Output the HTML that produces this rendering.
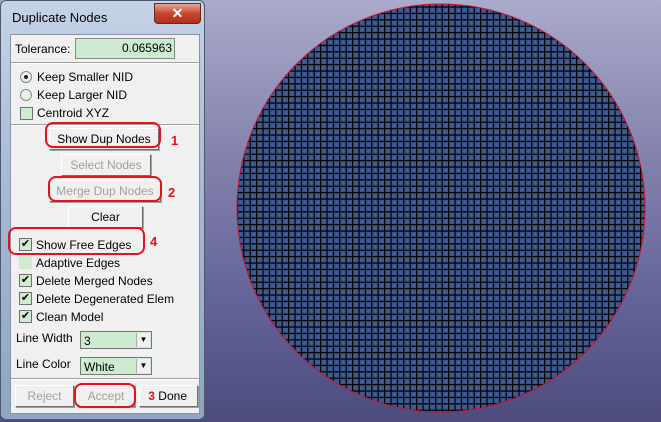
<!DOCTYPE html>
<html><head><style>
body{margin:0;width:661px;height:422px;overflow:hidden;position:relative;font-family:"Liberation Sans",sans-serif;font-size:12px;background:linear-gradient(#aaaacb 0%,#8584ae 35%,#65649a 70%,#4d4c7d 100%)}
.win{position:absolute;left:0;top:0;width:205px;height:420px;background:linear-gradient(#c4d3e6,#a9bcd6 40%,#8fa5c3);border:1px solid #4c5a70;border-radius:6px;box-sizing:border-box}
.title{position:absolute;left:11px;top:9px;font-size:13px;color:#000}
.close{position:absolute;left:153px;top:2px;width:45px;height:19px;background:linear-gradient(#e8a595,#c8452f 50%,#b0301c);border:1px solid #6a2a22;border-radius:0 0 4px 4px;color:#fff;text-align:center;font-weight:bold;font-size:14px;line-height:19px}
.panel{position:absolute;left:9px;top:33px;width:188px;height:378px;background:#f0f0f0;border:1px solid #8a94a4}
.a{position:absolute;white-space:nowrap}
.sep{position:absolute;left:0;width:188px;height:1px;background:#a0a0a0;border-bottom:1px solid #fff}
.btn{position:absolute;background:#f0f0f0;border:1px solid;border-color:#fff #707070 #707070 #fff;box-shadow:1px 1px 0 #a0a0a0;text-align:center;line-height:20px}
.dis{color:#a0a0a0}
.cb{position:absolute;width:11px;height:11px;background:#d0ecd0;border:1px solid #707070;font-size:11px;line-height:11px;text-align:center}
.rd{position:absolute;width:10px;height:10px;border-radius:50%;background:#e4f2e4;border:1px solid #888}
.red{position:absolute;border:2px solid #e8101a;border-radius:8px}
.num{position:absolute;color:#e8101a;font-weight:bold;font-size:13px}
.sel{position:absolute;width:72px;height:18px;background:#cdebd0;border:1px solid #777;box-sizing:border-box}
.sel span{position:absolute;left:3px;top:2px}
.sel i{position:absolute;right:1px;top:1px;width:13px;height:14px;background:#f0f0f0;border-left:1px solid #aaa;font-style:normal;font-size:8px;text-align:center;line-height:14px}
</style></head><body>
<svg style="position:absolute;left:0;top:0" width="661" height="422">
<defs><pattern id="g" width="6.4" height="6.4" patternUnits="userSpaceOnUse" x="0" y="0"><rect width="6.4" height="6.4" fill="#3d5b90"/><path d="M0 0.6H6.4M0.6 0V6.4" stroke="#000" stroke-width="1.2"/></pattern></defs>
<circle cx="441" cy="208" r="204" fill="url(#g)" stroke="#d01030" stroke-width="1"/>
</svg>
<div class="win">
<div class="title">Duplicate Nodes</div>
<div class="close">✕</div>
<div class="panel">
<div class="a" style="left:4px;top:7px">Tolerance:</div>
<div class="a" style="left:64px;top:3px;width:96px;height:19px;background:#cdebd0;border:1px solid #888;text-align:right;line-height:19px;padding-right:2px">0.065963</div>
<div class="sep" style="top:27px"></div>
<div class="rd" style="left:9px;top:36px"><div style="width:4px;height:4px;background:#222;border-radius:50%;margin:3px"></div></div>
<div class="a" style="left:26px;top:35px">Keep Smaller NID</div>
<div class="rd" style="left:9px;top:54px"></div>
<div class="a" style="left:26px;top:53px">Keep Larger NID</div>
<div class="cb" style="left:9px;top:72px"></div>
<div class="a" style="left:26px;top:71px">Centroid XYZ</div>
<div class="sep" style="top:89px"></div>
<div class="btn" style="left:38px;top:93px;width:108px">Show Dup Nodes</div>
<div class="btn dis" style="left:50px;top:119px;width:88px">Select Nodes</div>
<div class="btn dis" style="left:38px;top:145px;width:110px">Merge Dup Nodes</div>
<div class="btn" style="left:57px;top:171px;width:73px">Clear</div>
<div class="cb" style="left:8px;top:203px">✔</div>
<div class="a" style="left:25px;top:203px">Show Free Edges</div>
<div class="cb" style="left:8px;top:221px;border-color:#d0ecd0"></div>
<div class="a" style="left:25px;top:221px">Adaptive Edges</div>
<div class="cb" style="left:8px;top:239px">✔</div>
<div class="a" style="left:25px;top:239px">Delete Merged Nodes</div>
<div class="cb" style="left:8px;top:257px">✔</div>
<div class="a" style="left:25px;top:257px">Delete Degenerated Elem</div>
<div class="cb" style="left:8px;top:275px">✔</div>
<div class="a" style="left:25px;top:275px">Clean Model</div>
<div class="a" style="left:5px;top:296px">Line Width</div>
<div class="sel" style="left:69px;top:296px"><span>3</span><i>▼</i></div>
<div class="a" style="left:5px;top:322px">Line Color</div>
<div class="sel" style="left:69px;top:322px"><span>White</span><i>▼</i></div>
<div class="sep" style="top:343px"></div>
<div class="btn dis" style="left:4px;top:350px;width:57px">Reject</div>
<div class="btn dis" style="left:66px;top:350px;width:56px">Accept</div>
<div class="btn" style="left:128px;top:350px;width:57px;text-align:right;padding-right:0"><span style="color:#e8101a;font-weight:bold">3</span> Done&nbsp;&nbsp;&nbsp;</div>
</div>
</div>
<div class="red" style="left:45px;top:122px;width:112px;height:22px"></div>
<div class="num" style="left:171px;top:133px">1</div>
<div class="red" style="left:48px;top:176px;width:110px;height:22px"></div>
<div class="num" style="left:168px;top:185px">2</div>
<div class="red" style="left:8px;top:227px;width:133px;height:24px"></div>
<div class="num" style="left:150px;top:234px">4</div>
<div class="red" style="left:74px;top:383px;width:58px;height:21px"></div>
</body></html>
